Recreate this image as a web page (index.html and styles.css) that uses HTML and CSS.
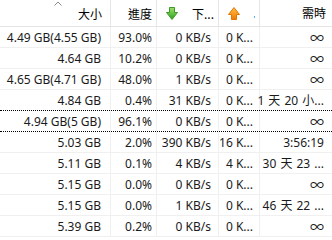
FILE: index.html
```html
<!DOCTYPE html>
<html>
<head>
<meta charset="utf-8">
<link rel="stylesheet" href="styles.css">
</head>
<body>
<div class="list">
  <div class="head">
    <div class="hc c-size"><span class="sort"><svg width="8" height="5" viewBox="0 0 8 5"><path d="M0.5 4.5 L4 1 L7.5 4.5" fill="none" stroke="#8a8a8a" stroke-width="1"/></svg></span>大小</div>
    <div class="hc c-prog">進度</div>
    <div class="hc c-down">
      <svg class="ico" width="14" height="15" viewBox="0 0 14 15">
        <defs><linearGradient id="gg" x1="0" y1="0" x2="0" y2="1"><stop offset="0" stop-color="#9be36a"/><stop offset="1" stop-color="#2f9e1b"/></linearGradient></defs>
        <path d="M4.5 1.5 H9.5 V6.5 H12.5 L7 13.5 L1.5 6.5 H4.5 Z" fill="url(#gg)" stroke="#3a9a24" stroke-width="1" stroke-linejoin="round"/>
      </svg>
      <span class="htxt">下...</span>
    </div>
    <div class="hc c-up">
      <svg class="ico" width="14" height="15" viewBox="0 0 14 15">
        <defs><linearGradient id="og" x1="0" y1="0" x2="0" y2="1"><stop offset="0" stop-color="#ffc04a"/><stop offset="1" stop-color="#f07a00"/></linearGradient></defs>
        <path d="M7 1.5 L12.5 8.5 H9.5 V13.5 H4.5 V8.5 H1.5 Z" fill="url(#og)" stroke="#e07800" stroke-width="1" stroke-linejoin="round"/>
      </svg>
      <span class="dot"></span>
    </div>
    <div class="hc c-eta">需時</div>
  </div>

  <div class="row"><div class="c c-size">4.49 GB(4.55 GB)</div><div class="c c-prog">93.0%</div><div class="c c-down">0 KB/s</div><div class="c c-up">0 K...</div><div class="c c-eta inf">∞</div></div>
  <div class="row"><div class="c c-size">4.64 GB</div><div class="c c-prog">10.2%</div><div class="c c-down">0 KB/s</div><div class="c c-up">0 K...</div><div class="c c-eta inf">∞</div></div>
  <div class="row"><div class="c c-size">4.65 GB(4.71 GB)</div><div class="c c-prog">48.0%</div><div class="c c-down">1 KB/s</div><div class="c c-up">0 K...</div><div class="c c-eta inf">∞</div></div>
  <div class="row pre-focus"><div class="c c-size">4.84 GB</div><div class="c c-prog">0.4%</div><div class="c c-down">31 KB/s</div><div class="c c-up">0 K...</div><div class="c c-eta">1 天 20 小...</div></div>
  <div class="row focus"><div class="c c-size">4.94 GB(5 GB)</div><div class="c c-prog">96.1%</div><div class="c c-down">0 KB/s</div><div class="c c-up">0 K...</div><div class="c c-eta inf">∞</div></div>
  <div class="row"><div class="c c-size">5.03 GB</div><div class="c c-prog">2.0%</div><div class="c c-down">390 KB/s</div><div class="c c-up">16 K...</div><div class="c c-eta">3:56:19</div></div>
  <div class="row"><div class="c c-size">5.11 GB</div><div class="c c-prog">0.1%</div><div class="c c-down">4 KB/s</div><div class="c c-up">4 K...</div><div class="c c-eta">30 天 23 ...</div></div>
  <div class="row"><div class="c c-size">5.15 GB</div><div class="c c-prog">0.0%</div><div class="c c-down">0 KB/s</div><div class="c c-up">0 K...</div><div class="c c-eta inf">∞</div></div>
  <div class="row"><div class="c c-size">5.15 GB</div><div class="c c-prog">0.0%</div><div class="c c-down">1 KB/s</div><div class="c c-up">0 K...</div><div class="c c-eta">46 天 22 ...</div></div>
  <div class="row"><div class="c c-size">5.39 GB</div><div class="c c-prog">0.2%</div><div class="c c-down">0 KB/s</div><div class="c c-up">0 K...</div><div class="c c-eta inf">∞</div></div>
</div>
</body>
</html>
```

FILE: styles.css
```css
html, body {
  margin: 0;
  padding: 0;
  background: #ffffff;
}
body {
  width: 332px;
  height: 240px;
  overflow: hidden;
  font-family: "Noto Sans", "Noto Sans CJK TC", sans-serif;
  font-size: 12px;
  color: #1a1a1a;
}
.list {
  display: flex;
  flex-direction: column;
  width: 332px;
}
.head, .row {
  display: flex;
  flex: none;
}
.head {
  height: 27px;
  border-bottom: 1px solid #e5e5e5;
  box-sizing: border-box;
}
.hc {
  position: relative;
  box-sizing: border-box;
  height: 26px;
  border-right: 1px solid #e5e5e5;
  display: flex;
  align-items: center;
  white-space: nowrap;
  color: #000;
  font-family: "Noto Sans CJK TC", sans-serif;
  font-size: 12px;
  flex: none;
}
.c-size { width: 111px; justify-content: flex-end; padding-right: 9px; }
.c-prog { width: 46px; justify-content: flex-end; padding-right: 4px; }
.c-down { width: 62px; justify-content: flex-end; padding-right: 7px; }
.c-up { width: 41px; justify-content: flex-end; padding-right: 6px; }
.c-eta { width: 72px; justify-content: flex-end; padding-right: 8px; border-right: none; }

.head .c-size { padding-right: 8px; }
.head .c-down { justify-content: flex-start; padding-left: 8px; padding-right: 0; }
.head .c-up { justify-content: flex-start; padding-left: 8px; padding-right: 0; }
.head .c-eta { padding-right: 6px; }
.sort {
  position: absolute;
  left: 54px;
  top: 1px;
  line-height: 0;
}
.ico { flex: none; display: block; }
.htxt { margin-left: 13px; }
.dot {
  width: 1px;
  height: 2px;
  background: #59b7f0;
  margin-left: 13px;
  margin-top: 8px;
}

.row {
  height: 21px;
  box-sizing: border-box;
  border-bottom: 1px solid #f0f0f0;
}
.c {
  box-sizing: border-box;
  height: 20px;
  border-right: 1px solid #f0f0f0;
  display: flex;
  align-items: center;
  white-space: nowrap;
  overflow: visible;
  flex: none;
}
.c.c-eta { border-right: none; word-spacing: 1px; }
.c-eta { font-family: "Noto Sans", "Noto Sans CJK TC", sans-serif; }
.pre-focus { border-bottom: 1px dotted #000; }
.focus { border-bottom: 1px dotted #000; }
.inf { font-size: 14px; }
```
